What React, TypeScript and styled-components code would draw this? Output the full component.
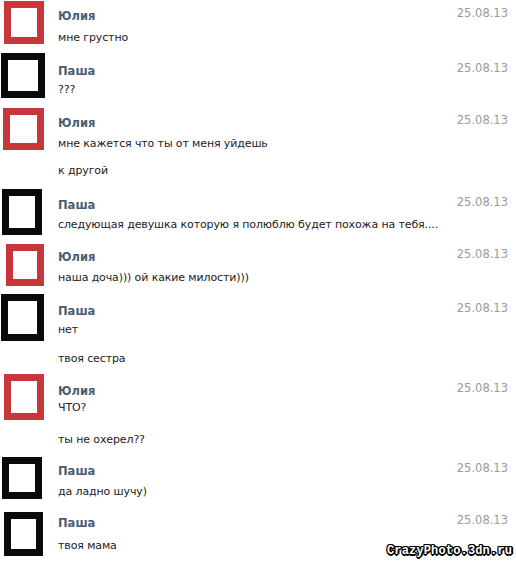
import styled, { createGlobalStyle } from "styled-components";

const GlobalStyle = createGlobalStyle`
  body {
    margin: 0;
    background: #ffffff;
  }
`;

type Msg = {
  from: "Юлия" | "Паша";
  lines: string[];
  h: number; // row height
  top: number; // name offset inside row
  ax: number; // avatar left
  aw: number; // avatar width
  ah: number; // avatar height
  shift?: number; // first line shift
  gap?: number; // space between lines
};

const messages: Msg[] = [
  { from: "Юлия", lines: ["мне грустно"], h: 52, top: 7, ax: 4, aw: 40, ah: 43, shift: 5 },
  { from: "Паша", lines: ["???"], h: 55, top: 10, ax: 1, aw: 44, ah: 45, shift: 2 },
  { from: "Юлия", lines: ["мне кажется что ты от меня уйдешь", "к другой"], h: 81, top: 7, ax: 3, aw: 41, ah: 42, shift: 4, gap: 9 },
  {
    from: "Паша",
    lines: ["следующая девушка которую я полюблю будет похожа на тебя...."],
    h: 55,
    top: 8,
    ax: 2,
    aw: 40,
    ah: 46,
    shift: 3,
  },
  { from: "Юлия", lines: ["наша доча))) ой какие милости)))"], h: 50, top: 5, ax: 6, aw: 38, ah: 42, shift: 4 },
  { from: "Паша", lines: ["нет", "твоя сестра"], h: 80, top: 9, ax: 1, aw: 43, ah: 47, shift: 2, gap: 11 },
  { from: "Юлия", lines: ["ЧТО?", "ты не охерел??"], h: 83, top: 9, ax: 4, aw: 40, ah: 46, shift: 0, gap: 14 },
  { from: "Паша", lines: ["да ладно шучу)"], h: 55, top: 6, ax: 2, aw: 40, ah: 42, shift: 4 },
  { from: "Паша", lines: ["твоя мама"], h: 49, top: 3, ax: 4, aw: 39, ah: 44, shift: 6 },
];

const Page = styled.div`
  position: relative;
  width: 516px;
  height: 561px;
  overflow: hidden;
  padding-top: 1px;
  box-sizing: border-box;
  font-family: "DejaVu Sans", Verdana, sans-serif;
`;

const Row = styled.div<{ $h: number }>`
  display: flex;
  height: ${(p) => p.$h}px;
`;

const AvatarCell = styled.div<{ $ax: number }>`
  width: 58px;
  flex: none;
  padding-left: ${(p) => p.$ax}px;
  box-sizing: border-box;
`;

const Avatar = styled.div<{ $girl: boolean; $w: number; $h: number }>`
  width: ${(p) => p.$w}px;
  height: ${(p) => p.$h}px;
  box-sizing: border-box;
  border: 7px solid ${(p) => (p.$girl ? "#c8363b" : "#0a0a0a")};
  background: #fff;
`;

const Body = styled.div<{ $top: number }>`
  flex: 1;
  padding-top: ${(p) => p.$top}px;
  padding-right: 8px;
`;

const Header = styled.div`
  display: flex;
  justify-content: space-between;
  align-items: flex-start;
  height: 16px;
`;

const Name = styled.span`
  font-weight: bold;
  font-size: 11.5px;
  color: #4a5e72;
  line-height: 16px;
`;

const Date = styled.span`
  font-family: "DejaVu Sans", sans-serif;
  font-size: 11.5px;
  color: #9a9a9a;
  line-height: 12px;
  margin-top: -1px;
`;

const Lines = styled.div<{ $shift: number; $gap: number }>`
  display: flex;
  flex-direction: column;
  gap: ${(p) => p.$gap}px;
  margin-top: ${(p) => p.$shift}px;
`;

const Line = styled.div`
  font-size: 11px;
  letter-spacing: -0.12px;
  color: #222;
  line-height: 18px;
  white-space: nowrap;
`;

const Watermark = styled.div`
  position: absolute;
  right: 4px;
  bottom: 3px;
  font-family: "Liberation Mono", "DejaVu Sans Mono", monospace;
  font-weight: bold;
  font-size: 12px;
  letter-spacing: 0.15px;
  color: #fff;
  text-shadow: -1px -1px 0 #000, 1px -1px 0 #000, -1px 1px 0 #000, 1px 1px 0 #000,
    0 -1px 0 #000, 0 1px 0 #000, -1px 0 0 #000, 1px 0 0 #000, 2px 0 0 #000, 0 2px 0 #000;
`;

export default function App() {
  return (
    <>
      <GlobalStyle />
      <Page>
        {messages.map((m, i) => (
          <Row key={i} $h={m.h}>
            <AvatarCell $ax={m.ax}>
              <Avatar $girl={m.from === "Юлия"} $w={m.aw} $h={m.ah} />
            </AvatarCell>
            <Body $top={m.top}>
              <Header>
                <Name>{m.from}</Name>
                <Date>25.08.13</Date>
              </Header>
              <Lines $shift={m.shift ?? 4} $gap={m.gap ?? 10}>
                {m.lines.map((l, j) => (
                  <Line key={j}>{l}</Line>
                ))}
              </Lines>
            </Body>
          </Row>
        ))}
        <Watermark>CrazyPhoto.3dn.ru</Watermark>
      </Page>
    </>
  );
}
